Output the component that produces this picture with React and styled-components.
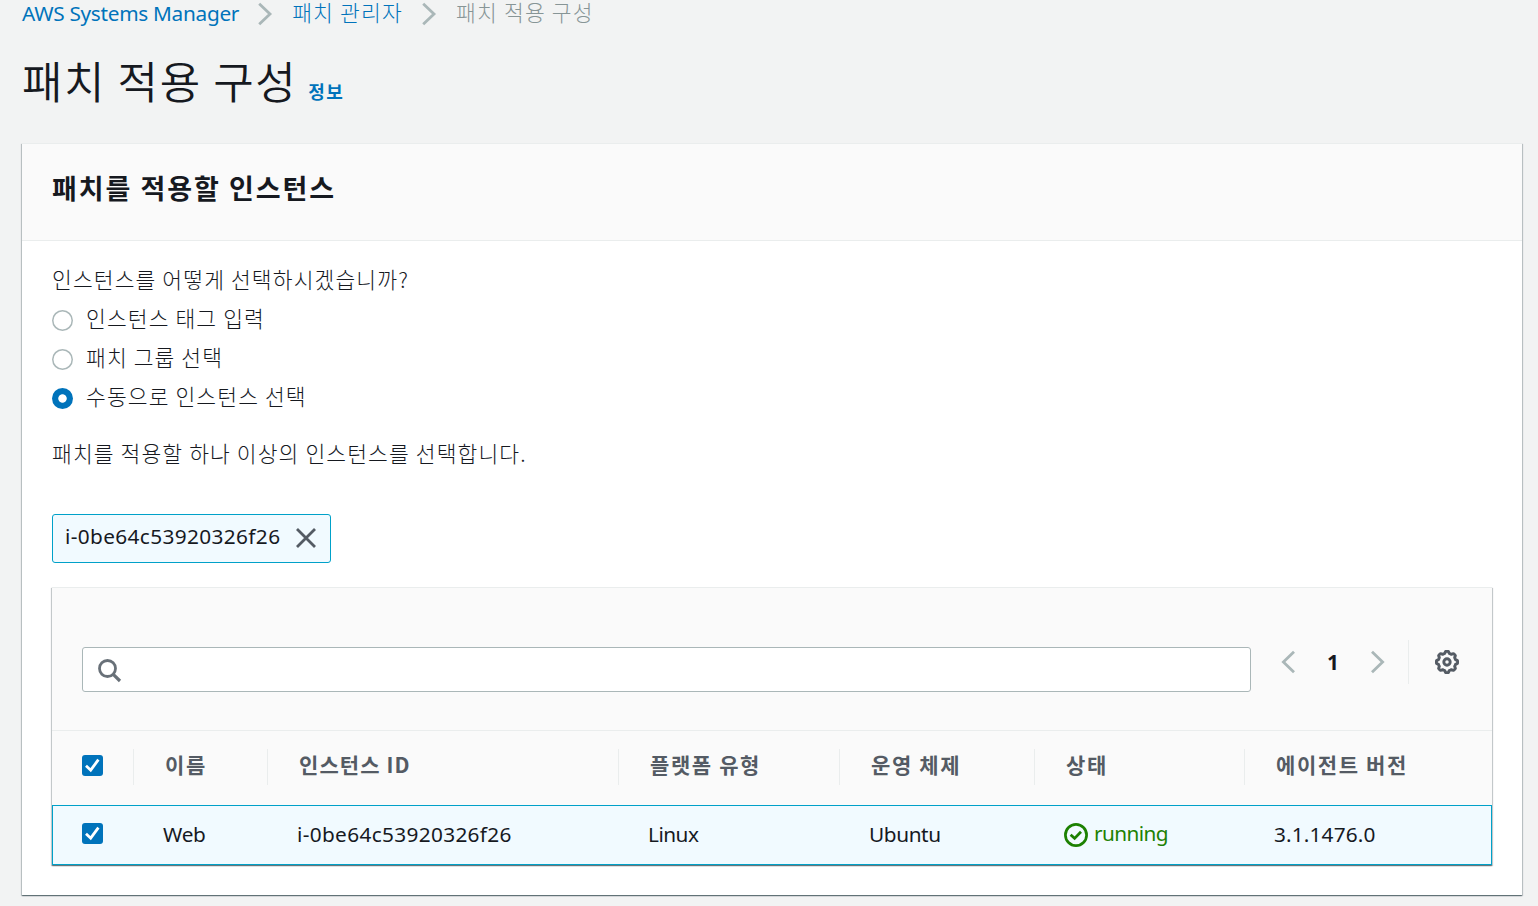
import React from "react";
import styled, { createGlobalStyle } from "styled-components";

const Global = createGlobalStyle`
  * { box-sizing: border-box; }
  body {
    margin: 0;
    background: #f2f3f3;
    color: #16191f;
    font-family: "Noto Sans", "Noto Sans CJK KR", sans-serif;
    font-size: 20.8px;
    overflow: hidden;
  }
`;

const Page = styled.main`
  height: 906px;
  overflow: hidden;
  padding: 0 16px 0 22px;
  display: flex;
  flex-direction: column;
`;

const Text = styled.span`
  display: block;
  margin: 0;
  white-space: nowrap;
  font-family: ${(p) => (p.$ko ? '"Noto Sans CJK KR", sans-serif' : '"Noto Sans", sans-serif')};
  font-size: ${(p) => p.$size || 20.8}px;
  font-weight: ${(p) => p.$weight || (p.$ko ? 300 : 400)};
  letter-spacing: ${(p) => p.$ls || 0}px;
  line-height: ${(p) => p.$lh || 30}px;
  color: ${(p) => p.$color || "inherit"};
`;

const Breadcrumbs = styled.nav`
  display: flex;
  align-items: flex-start;
  height: 28px;
`;

const Separator = styled.svg`
  width: 16px;
  height: 24px;
  margin: 2px 19px 0 18px;
  flex: none;
`;

const Heading = styled.header`
  display: flex;
  align-items: flex-start;
  height: 115px;
  padding-top: 22px;
  gap: 11px;
`;

const InfoLink = styled.a`
  padding-top: 26px;
`;

const Card = styled.section`
  background: #fff;
  border-top: 1px solid #eaeded;
  box-shadow: 0 1px 1px 0 rgba(0, 28, 36, 0.4), 1px 1px 1px 0 rgba(0, 28, 36, 0.18),
    -1px 1px 1px 0 rgba(0, 28, 36, 0.18);
`;

const Panel = styled(Card)`
  width: 1500px;
  height: 752px;
`;

const PanelHeader = styled.div`
  height: 97px;
  padding: 24px 30px 0;
  background: #fafafa;
  border-bottom: 1px solid #eaeded;
`;

const PanelBody = styled.div`
  padding: 23px 30px 0;
  display: flex;
  flex-direction: column;
`;

const RadioGroup = styled.div`
  display: flex;
  flex-direction: column;
  padding-top: 9px;
  height: 144px;
`;

const RadioRow = styled.label`
  display: flex;
  align-items: flex-start;
  gap: 13px;
  height: 39px;
`;

const Radio = styled.span`
  width: 21px;
  height: 21px;
  margin-top: 7px;
  flex: none;
  border-radius: 50%;
  background: ${(p) => (p.$checked ? "radial-gradient(circle, #fff 3.8px, #0073bb 4.6px)" : "#fff")};
  box-shadow: ${(p) => (p.$checked ? "none" : "inset 0 0 0 1.5px #aab7b8")};
`;

const Token = styled.div`
  display: flex;
  align-items: flex-start;
  width: 279px;
  height: 49px;
  margin-top: 46px;
  padding: 7px 12px;
  border: 1px solid #00a1c9;
  border-radius: 3px;
  background: #f1faff;
  justify-content: space-between;
`;

const CloseIcon = styled.svg`
  width: 22px;
  height: 22px;
  margin: 5px 1px 0 0;
`;

const TableCard = styled(Card)`
  margin-top: 24px;
  height: 278px;
`;

const Toolbar = styled.div`
  display: flex;
  align-items: flex-start;
  height: 143px;
  padding: 59px 30px 0;
  background: #fafafa;
  border-bottom: 1px solid #eaeded;
`;

const Search = styled.div`
  width: 1169px;
  height: 45px;
  padding: 11px 15px;
  background: #fff;
  border: 1px solid #aab7b8;
  border-radius: 3px;
`;

const Pager = styled.div`
  display: flex;
  align-items: center;
  height: 44px;
  width: 158px;
  margin-top: -7px;
  padding: 0 23px 0 30px;
  justify-content: space-between;
  border-right: 1px solid #eaeded;
`;

const GearBox = styled.div`
  display: flex;
  align-items: center;
  height: 44px;
  margin: -7px 0 0 26px;
`;

const Row = styled.div`
  display: grid;
  grid-template-columns: 82px 134px 351px 221px 195px 210px 1fr;
`;

const HeadRow = styled(Row)`
  height: 74px;
  padding-top: 18px;
  background: #fafafa;
`;

const BodyRow = styled(Row)`
  height: 60px;
  padding-top: 13px;
  background: #f1faff;
  border: 1px solid #00a1c9;
  grid-template-columns: 81px 134px 351px 221px 195px 210px 1fr;
`;

const HeadCell = styled.div`
  height: 36px;
  padding-left: ${(p) => (p.$box ? 30 : 31)}px;
  border-right: ${(p) => (p.$last ? "none" : "1px solid #eaeded")};
`;

const Cell = styled.div`
  display: flex;
  align-items: flex-start;
  gap: 6px;
  padding-left: 29px;
`;

const Box = styled.span`
  display: flex;
  width: 21px;
  height: 21px;
  margin-top: ${(p) => p.$top}px;
  border-radius: 3px;
  background: #0073bb;
`;

const StatusIcon = styled.svg`
  width: 24px;
  height: 24px;
  margin-top: 4px;
  flex: none;
`;

const Checkbox = ({ top }) => (
  <Box $top={top}>
    <svg width="21" height="21" viewBox="0 0 21 21">
      <path d="M4 10.8 L8.7 15.2 L16.4 4.7" fill="none" stroke="#fff" strokeWidth="2.8" />
    </svg>
  </Box>
);

const Chevron = () => (
  <Separator viewBox="0 0 16 24">
    <path d="M2.2 1.8 L13 12 L2.2 22.2" fill="none" stroke="#aab7b8" strokeWidth="2.8" />
  </Separator>
);

const Arrow = ({ left }) => (
  <svg width="15" height="24" viewBox="0 0 15 24">
    <path
      d={left ? "M13 1.8 L2.4 12 L13 22.2" : "M2 1.8 L12.6 12 L2 22.2"}
      fill="none"
      stroke="#aab7b8"
      strokeWidth="2.8"
    />
  </svg>
);

const gearPath = (() => {
  const pts = [];
  for (let i = 0; i <= 96; i += 1) {
    const a = (i / 96) * Math.PI * 2;
    const wave = Math.max(-1, Math.min(1, 1.9 * Math.cos(8 * a)));
    const r = 9.7 + 0.9 * wave;
    pts.push(`${(12 + r * Math.sin(a)).toFixed(2)} ${(12 - r * Math.cos(a)).toFixed(2)}`);
  }
  return `M${pts.join("L")}Z`;
})();

const Gear = () => (
  <svg width="24" height="24" viewBox="0 0 24 24" fill="none" stroke="#545b64" strokeWidth="2.9">
    <path d={gearPath} strokeLinejoin="round" />
    <circle cx="12" cy="12" r="3.2" />
  </svg>
);

const options = [
  { label: "인스턴스 태그 입력", checked: false },
  { label: "패치 그룹 선택", checked: false },
  { label: "수동으로 인스턴스 선택", checked: true },
];

const columns = ["이름", "인스턴스 ID", "플랫폼 유형", "운영 체제", "상태", "에이전트 버전"];

export default function App() {
  return (
    <>
      <Global />
      <Page>
        <Breadcrumbs>
          <Text $color="#0073bb" $size={20.8} $lh={26} $ls={-0.3}>AWS Systems Manager</Text>
          <Chevron />
          <Text $ko $color="#0073bb" $size={21.5} $lh={24} $ls={1.2}>패치 관리자</Text>
          <Chevron />
          <Text $ko $color="#879596" $size={21.5} $lh={24} $ls={1.2}>패치 적용 구성</Text>
        </Breadcrumbs>
        <Heading>
          <Text as="h1" $ko $weight={350} $size={44} $lh={60} $ls={1.6}>패치 적용 구성</Text>
          <InfoLink>
            <Text $ko $weight={700} $size={18} $color="#0073bb" $lh={30} $ls={1.5}>정보</Text>
          </InfoLink>
        </Heading>
        <Panel>
          <PanelHeader>
            <Text $ko $weight={700} $size={27} $lh={40} $ls={1.95}>패치를 적용할 인스턴스</Text>
          </PanelHeader>
          <PanelBody>
            <Text $ko $size={21.5} $ls={1.12}>인스턴스를 어떻게 선택하시겠습니까?</Text>
            <RadioGroup>
              {options.map((o) => (
                <RadioRow key={o.label}>
                  <Radio $checked={o.checked} />
                  <Text $ko $size={21.5} $ls={1.12}>{o.label}</Text>
                </RadioRow>
              ))}
            </RadioGroup>
            <Text $ko $size={21.5} $ls={1.12}>패치를 적용할 하나 이상의 인스턴스를 선택합니다.</Text>
            <Token>
              <Text $ls={0.37} $lh={28}>i-0be64c53920326f26</Text>
              <CloseIcon viewBox="0 0 22 22">
                <path d="M2 2 L20 20 M20 2 L2 20" stroke="#545b64" strokeWidth="2.8" />
              </CloseIcon>
            </Token>
            <TableCard>
              <Toolbar>
                <Search>
                  <svg width="24" height="24" viewBox="0 0 24 24" fill="none" stroke="#687078">
                    <circle cx="9.5" cy="9.5" r="8" strokeWidth="2.8" />
                    <path d="M15 15.2 L22 22" strokeWidth="3.2" />
                  </svg>
                </Search>
                <Pager>
                  <Arrow left />
                  <Text $weight={700} $size={20.8}>1</Text>
                  <Arrow />
                </Pager>
                <GearBox>
                  <Gear />
                </GearBox>
              </Toolbar>
              <HeadRow>
                <HeadCell $box>
                  <Checkbox top={6} />
                </HeadCell>
                {columns.map((c, i) => (
                  <HeadCell key={c} $last={i === columns.length - 1}>
                    <Text $ko $weight={700} $color="#545b64" $ls={c.endsWith("ID") ? 1.1 : 1.6} $size={21} $lh={31}>{c}</Text>
                  </HeadCell>
                ))}
              </HeadRow>
              <BodyRow>
                <Cell>
                  <Checkbox top={4} />
                </Cell>
                <Cell><Text $ls={-0.3}>Web</Text></Cell>
                <Cell><Text $ls={0.34}>i-0be64c53920326f26</Text></Cell>
                <Cell><Text $ls={-0.5}>Linux</Text></Cell>
                <Cell><Text $ls={-0.4}>Ubuntu</Text></Cell>
                <Cell>
                  <StatusIcon viewBox="0 0 24 24" fill="none" stroke="#1d8102">
                    <circle cx="12" cy="12" r="10.6" strokeWidth="2.7" />
                    <path d="M6.6 11.8 L10.6 15.4 L17 8.8" strokeWidth="2.8" />
                  </StatusIcon>
                  <Text $color="#1d8102" $lh={28} $ls={-0.6}>running</Text>
                </Cell>
                <Cell><Text $ls={0.15}>3.1.1476.0</Text></Cell>
              </BodyRow>
            </TableCard>
          </PanelBody>
        </Panel>
      </Page>
    </>
  );
}
